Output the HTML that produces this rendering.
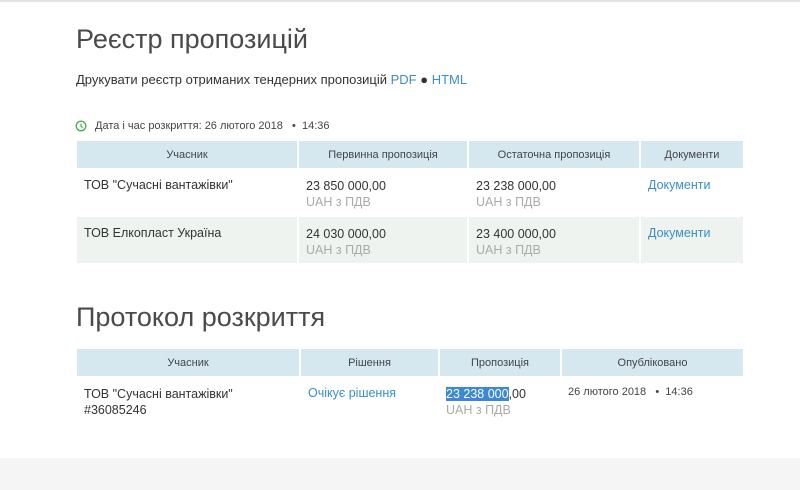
<!DOCTYPE html><html><head><meta charset="utf-8"><style>
body{margin:0;width:800px;height:490px;background:#fff;font-family:"Liberation Sans",sans-serif;color:#333;position:relative;overflow:hidden}
.a{position:absolute;white-space:nowrap}
h1{position:absolute;margin:0;font-weight:normal;font-size:27px;color:#4a4a4a}
.hd{position:absolute;background:#d5e8f0;font-size:11px;color:#444;text-align:center;line-height:29px;height:27px}
.c{font-size:12.5px;color:#333}
.g{color:#aaa}
a{color:#3a8fc7;text-decoration:none}
</style></head><body>
<div class="a" style="left:0;top:0;width:800px;height:2px;background:#e4e4e4"></div>
<h1 style="left:76px;top:24px">Реєстр пропозицій</h1>
<div class="a c" style="left:76px;top:72px;font-size:13px">Друкувати реєстр отриманих тендерних пропозицій <a>PDF</a> ● <a>HTML</a></div>
<svg class="a" style="left:75px;top:120px" width="12" height="12"><circle cx="6" cy="6" r="4.8" fill="none" stroke="#4caf50" stroke-width="1.4"/><path d="M6 3.5V6.3L7.8 7.6" stroke="#4caf50" stroke-width="1.2" fill="none"/></svg>
<div class="a" style="left:95px;top:120px;font-size:11px;color:#444">Дата і час розкриття: 26 лютого 2018 &nbsp;&nbsp;• &nbsp;14:36</div>
<div class="hd" style="left:77px;top:141px;width:220px">Учасник</div>
<div class="hd" style="left:299px;top:141px;width:168px">Первинна пропозиція</div>
<div class="hd" style="left:469px;top:141px;width:170px">Остаточна пропозиція</div>
<div class="hd" style="left:641px;top:141px;width:102px">Документи</div>
<div class="a" style="left:77px;top:217px;width:666px;height:46px;background:#eef3ef"></div>
<div class="a" style="left:297px;top:168px;width:2px;height:95px;background:#fff"></div>
<div class="a" style="left:467px;top:168px;width:2px;height:95px;background:#fff"></div>
<div class="a" style="left:639px;top:168px;width:2px;height:95px;background:#fff"></div>
<div class="a c" style="left:84px;top:178px">ТОВ "Сучасні вантажівки"</div>
<div class="a c" style="left:306px;top:178px;line-height:16px">23 850 000,00<br><span class="g">UAH з ПДВ</span></div>
<div class="a c" style="left:476px;top:178px;line-height:16px">23 238 000,00<br><span class="g">UAH з ПДВ</span></div>
<div class="a c" style="left:648px;top:178px"><a>Документи</a></div>
<div class="a c" style="left:84px;top:226px">ТОВ Елкопласт Україна</div>
<div class="a c" style="left:306px;top:226px;line-height:16px">24 030 000,00<br><span class="g">UAH з ПДВ</span></div>
<div class="a c" style="left:476px;top:226px;line-height:16px">23 400 000,00<br><span class="g">UAH з ПДВ</span></div>
<div class="a c" style="left:648px;top:226px"><a>Документи</a></div>
<h1 style="left:76px;top:302px">Протокол розкриття</h1>
<div class="hd" style="left:77px;top:349px;width:222px">Учасник</div>
<div class="hd" style="left:301px;top:349px;width:137px">Рішення</div>
<div class="hd" style="left:440px;top:349px;width:120px">Пропозиція</div>
<div class="hd" style="left:562px;top:349px;width:181px">Опубліковано</div>
<div class="a c" style="left:84px;top:386px;line-height:16px">ТОВ "Сучасні вантажівки"<br>#36085246</div>
<div class="a c" style="left:308px;top:386px"><a>Очікує рішення</a></div>
<div class="a c" style="left:446px;top:386px;line-height:16px"><span style="background:#3b87d8;color:#fff">23 238 000</span>,00<br><span class="g">UAH з ПДВ</span></div>
<div class="a" style="left:568px;top:386px;font-size:11px;color:#444">26 лютого 2018 &nbsp;&nbsp;• &nbsp;14:36</div>
<div class="a" style="left:0;top:458px;width:800px;height:32px;background:#f5f5f5"></div>
</body></html>
